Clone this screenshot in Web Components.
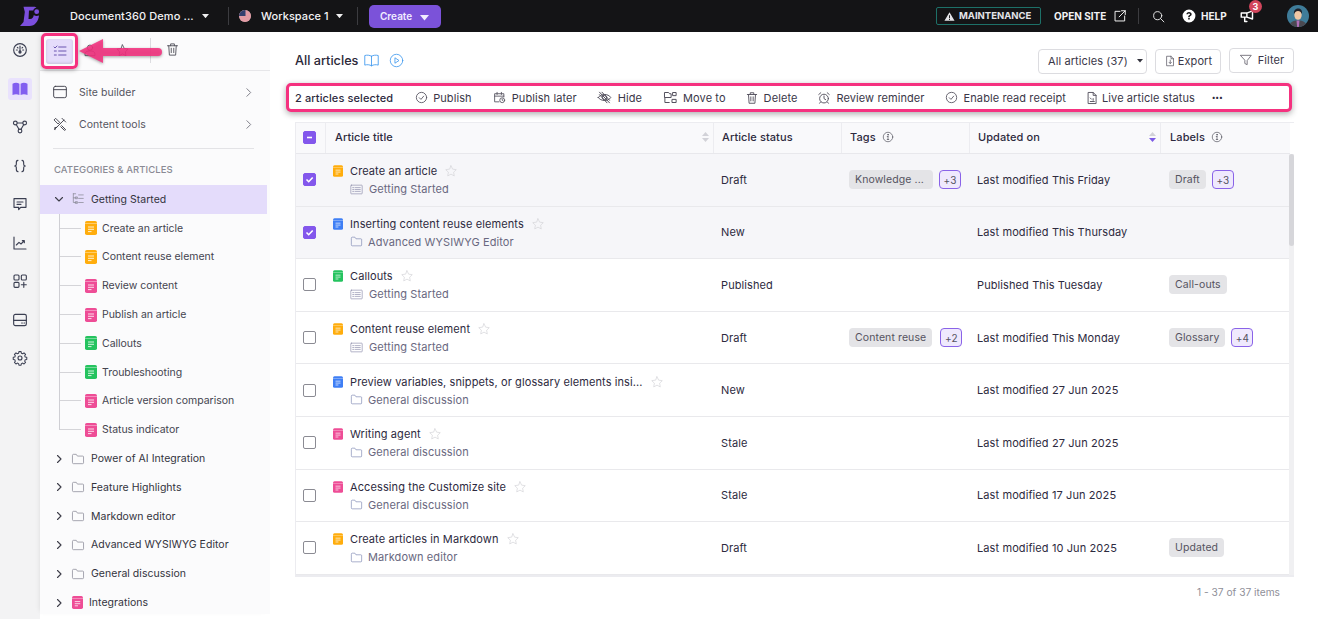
<!DOCTYPE html>
<html><head><meta charset="utf-8"><title>All articles</title>
<style>
html,body{margin:0;padding:0;height:100%;overflow:hidden;background:#fff}
body{font-family:Inter,"Noto Sans",sans-serif;font-size:11px;color:#2d2a3e}
app-shell{height:619px}
</style></head><body>
<app-shell>
  <app-topbar></app-topbar>
  <app-rail slot="rail"></app-rail>
  <app-sidebar slot="side"></app-sidebar>
  <articles-main slot="main"></articles-main>
</app-shell>
<script>
const ICONS={
 gauge:'<circle cx="12" cy="12" r="9.500"/><path d="M12 6v9M8 8l1 1M16 8l-1 1M6.500 12h1.500M16 12h1.500"/><circle cx="12" cy="15" r="1.600" fill="currentColor"/>',
 book:'<path fill="currentColor" stroke="none" d="M2 5c3-1.600 6.500-1.600 9.200 0v15c-2.700-1.500-6.200-1.500-9.200 0zM12.800 5c2.700-1.600 6.200-1.600 9.200 0v15c-3-1.500-6.500-1.500-9.200 0z"/>',
 bookline:'<path d="M12 6C9.500 4.300 5.500 4 2.500 5v13.500c3-1 7-.7 9.500 1 2.500-1.700 6.500-2 9.500-1V5c-3-1-7-.7-9.500 1zM12 6v13.500"/>',
 nodes:'<circle cx="5" cy="6" r="2.800"/><circle cx="19" cy="6" r="2.800"/><circle cx="12" cy="18" r="2.800"/><path d="M7.800 6h8.400M6.500 8.500l4 7M17.500 8.500l-4 7"/>',
 braces:'<path d="M9 3.500C6.500 3.500 6.500 5 6.500 7v2.500c0 1.500-1 2.500-2.500 2.500 1.500 0 2.500 1 2.500 2.500V17c0 2 0 3.500 2.500 3.500M15 3.500c2.500 0 2.500 1.500 2.500 3.500v2.500c0 1.500 1 2.500 2.500 2.500-1.500 0-2.500 1-2.500 2.500V17c0 2 0 3.500-2.500 3.500"/>',
 comment:'<path d="M3 4h18v13h-8l-3 3.500V17H3zM7.500 9h9M7.500 12.500h6"/>',
 chart:'<path d="M3 3v18h18M6.500 15l4-4 3 2.500 5-5M15.500 8.500h3v3"/>',
 apps:'<rect x="3" y="3" width="7.500" height="7.500" rx="1.500"/><rect x="14" y="3" width="7.500" height="7.500" rx="1.500"/><rect x="3" y="14" width="7.500" height="7.500" rx="1.500"/><path d="M17.700 14v7.500M14 17.700h7.500"/>',
 layout:'<rect x="2.500" y="3.500" width="19" height="17" rx="2.500"/><path d="M2.500 12.500h19M14.500 16.500h1M18 16.500h1"/>',
 gear:'<circle cx="12" cy="12" r="3"/><path d="M10.200 2.500h3.600l.5 2.600 2.200.9 2.200-1.500 2.600 2.600-1.500 2.200.9 2.200 2.600.5v3.600l-2.600.5-.9 2.200 1.500 2.200-2.600 2.600-2.200-1.500-2.200.9-.5 2.600h-3.600l-.5-2.600-2.200-.9-2.200 1.500-2.600-2.600 1.500-2.200-.9-2.200-2.600-.5v-3.600l2.600-.5.9-2.200-1.500-2.200 2.600-2.600 2.200 1.500 2.200-.9z" transform="translate(1.200 .2) scale(.9)"/>',
 listcheck:'<path d="M10 6h11M10 12h11M10 18h11M3 6l1.500 1.500L7.500 4.500M3.500 12h3M3.500 18h3"/>',
 trash:'<path d="M4 6h16M9 6V3h6v3M6 6l1 15h10l1-15M10 10v7M14 10v7"/>',
 star:'<path d="M12 3l2.800 5.800 6.200.9-4.500 4.400 1.100 6.300L12 17.400l-5.600 3 1.100-6.300L3 9.700l6.200-.9z"/>',
 person:'<circle cx="12" cy="8" r="4.500"/><path d="M3.500 21v-2.500c0-3 3-5 8.500-5s8.500 2 8.500 5V21z"/>',
 window:'<rect x="2.500" y="3.500" width="19" height="17" rx="2.500"/><path d="M2.500 8.500h19"/>',
 tools:'<path d="M4 20L18 6M15 3.500l5.500 5.500M3.500 5.500l2-2 6 6-2 2zM14.500 14.500l6 6-2 1-5.500-5.500M7 17l-3 .5.500 3"/>',
 chevr:'<path d="M9 5l7 7-7 7"/>',
 chevd:'<path d="M5 9l7 7 7-7"/>',
 tree:'<path d="M4 3v15h5M4 10h5M4 3h4M13 5h8M13 11h8M13 18h8"/><rect x="8" y="8.500" width="3" height="3"/><rect x="8" y="16.500" width="3" height="3"/>',
 folder:'<path d="M2.500 5.500a1.500 1.500 0 0 1 1.500-1.500h5l2 3h9a1.500 1.500 0 0 1 1.500 1.500v10a1.500 1.500 0 0 1-1.500 1.500H4a1.500 1.500 0 0 1-1.500-1.500z"/>',
 listbox:'<rect x="1.500" y="4" width="21" height="16" rx="1"/><path d="M5 8.500h2.500M10 8.500h9M5 12h2.500M10 12h9M5 15.500h2.500M10 15.500h9"/>',
 play:'<circle cx="12" cy="12" r="10"/><path d="M10 8l6 4-6 4z"/>',
 check:'<circle cx="12" cy="12" r="9.500"/><path d="M8 12.500l3 3 5-6"/>',
 checkd:'<circle cx="12" cy="12" r="9.500" stroke-dasharray="13 1.500"/><path d="M8 12.500l3 3 5-6"/>',
 cal:'<path d="M11 20H3V5h17v6M3 9.500h17M7.500 2.500v4M15.500 2.500v4"/><circle cx="17" cy="17" r="4.500"/><path d="M17 14.800V17l1.500 1"/>',
 eyeoff:'<path d="M2 12c4-6.500 16-6.500 20 0-4 6.500-16 6.500-20 0z"/><circle cx="12" cy="12" r="3.500"/><path d="M4 3.500l16 17M8 3.500l12 13M4 7.500l12 13"/>',
 move:'<path d="M3 4h6l1.500 2H13v6H3zM3 12v8h7M16 4h5v5h-5zM15 15h6v5h-6z"/>',
 alarm:'<circle cx="12" cy="13" r="7.500"/><path d="M12 8.500V13l3 2M3 6l3.500-3M21 6l-3.500-3M6 19l-1.500 2M18 19l1.500 2"/>',
 filestat:'<path d="M6 2.500h8l5 5v14H6zM14 2.500v5h5M9 12l2 2M9 18h7M14 13v3"/>',
 filedown:'<path d="M6 2.500h8l5 5v14H6zM14 2.500v5h5M12.500 10v7M10 14.500l2.500 2.500 2.500-2.500"/>',
 filter:'<path d="M3 4h18l-7 9v7l-4-2v-5z"/>',
 info:'<circle cx="12" cy="12" r="9.500"/><path d="M12 11v6M10.500 17h3M10.500 11H12"/><circle cx="12" cy="7.500" r=".8" fill="currentColor"/>',
 warn:'<path fill="currentColor" stroke="none" d="M12 2.500L23 21.500H1zM11 9v7h2V9zM11 17.500v2h2v-2z" fill-rule="evenodd"/>',
 ext:'<path d="M12 4H3.500v16.500H20V12M14.500 3H21v6.500M21 3L10.500 13.500"/>',
 search:'<circle cx="10.500" cy="10.500" r="7.500"/><path d="M16 16l6 6"/>',
 help:'<path fill="currentColor" stroke="none" fill-rule="evenodd" d="M12 1a11 11 0 1 0 0 22 11 11 0 0 0 0-22zM12 5c2.800 0 4.500 1.600 4.500 3.800 0 1.700-1 2.600-2.100 3.400-.9.600-1.200 1-1.200 1.800h-2.600c0-1.800.7-2.600 1.800-3.400.9-.6 1.400-1 1.400-1.700 0-.8-.7-1.400-1.800-1.400s-1.900.7-2 1.700H7.500C7.600 6.700 9.300 5 12 5zM10.600 15.500h2.700V18.200h-2.700z"/>',
 mega:'<path d="M2 6.500h9L20 3v13l-9-3H7.500v7H11M2 6.500V13h5.500M11 6.500V13"/>'
};
const svg=(n,s,c,w)=>`<svg width="${s}" height="${s}" viewBox="0 0 24 24" fill="none" stroke="${c||'currentColor'}" stroke-width="${w||1.6}" stroke-linecap="round" stroke-linejoin="round" style="display:block;flex:none;color:${c||'currentColor'}">${ICONS[n]}</svg>`;
const doc=(c,w,h)=>`<svg width="${w}" height="${h}" viewBox="0 0 12 14" style="display:block;flex:none"><rect width="12" height="14" rx="1.800" fill="${c}"/><rect y="2.300" width="12" height=".7" fill="#fff" opacity=".55"/><path d="M3 6h6M3 8.300h6M3 10.600h3.500" stroke="#fff" stroke-width=".9" opacity=".9"/></svg>`;
const COL={o:'#ffad0d',p:'#ee4d96',g:'#25c35f',b:'#3f7ff5'};
const caret=(c,s)=>`<svg width="${s||7}" height="${(s||7)*.6}" viewBox="0 0 10 6" style="display:block;flex:none"><path d="M0 0h10L5 6z" fill="${c}"/></svg>`;
function def(name,html){customElements.define(name,class extends HTMLElement{connectedCallback(){if(this.shadowRoot)return;const r=this.attachShadow({mode:'open'});r.innerHTML=typeof html==='function'?html(this):html;}});}

def('app-shell',`<style>:host{display:flex;flex-direction:column;width:1318px;height:619px;overflow:hidden}
.b{display:flex;flex:1;min-height:0}</style><slot></slot><div class="b"><slot name="rail"></slot><slot name="side"></slot><slot name="main"></slot></div>`);

def('app-topbar',`<style>
:host{display:flex;align-items:center;height:32px;background:#141416;color:#f2f2f4;font:500 11px/1 Inter,sans-serif;flex:none;position:relative}
.sep{width:1px;height:18px;background:#3c3c40}
.logo{margin-left:19px;margin-right:30px}
.create{width:72px;height:23px;background:#7b52d9;border-radius:5px;display:flex;align-items:center;font:600 10px/1 Inter,sans-serif;color:#f1ecff;box-sizing:border-box;padding-left:11px;gap:8px}
.maint{width:105px;height:18px;border:1px solid #1d7068;border-radius:2px;box-sizing:border-box;display:flex;align-items:center;padding-left:7px;gap:4px;font:700 9.500px/1 Inter,sans-serif;color:#e4e4e8;margin-left:495px}
.up{font-weight:700}
.badge{position:absolute;left:1249px;top:0;width:13px;height:13px;border-radius:50%;background:#d2465c;color:#fff;font:700 9px/13px Inter,sans-serif;text-align:center}
</style>
<svg class="logo" width="21" height="21" viewBox="0 0 21 21"><path fill="#7c4fdd" d="M4.500 .7H15c1 0 2 .3 2.500.8-2 .5-3 1.700-3.200 3H10L9.500 13H11c2.500 0 3.500-2 3.800-4 1.200 1 3.200 1.300 5.200.5-.5 5.500-4 10.500-9.500 10.500H1l3.500-4 1.300-10z"/><circle cx="17.700" cy="5.700" r="2.400" fill="#7c4fdd"/></svg>
<span style="width:123px;white-space:nowrap;letter-spacing:.1px">Document360 Demo ...</span>
<span style="margin-left:9px">${caret('#f0f0f0')}</span>
<span class="sep" style="margin-left:19px"></span>
<svg width="12" height="12" viewBox="0 0 12 12" style="margin-left:10px;border-radius:50%;flex:none"><rect width="12" height="12" fill="#fff"/><path d="M0 1h12M0 3h12M0 5h12M0 7h12M0 9h12M0 11h12" stroke="#c8384b" stroke-width="1"/><rect width="6.500" height="6" fill="#34406e"/></svg>
<span style="margin-left:10px;width:68px;white-space:nowrap;letter-spacing:.05px">Workspace 1</span>
<span style="margin-left:7px">${caret('#f0f0f0')}</span>
<span class="sep" style="margin-left:14px"></span>
<span class="create" style="margin-left:11px"><span>Create</span><span style="margin-top:4px">${caret('#f1ecff',9)}</span></span>
<span class="maint">${svg('warn',11,'#e4e4e8')}<span>MAINTENANCE</span></span>
<span class="up" style="margin-left:13px;width:54px;white-space:nowrap;font-size:10px">OPEN SITE</span>
<span style="margin-left:5px">${svg('ext',14,'#f0f0f0',1.7)}</span>
<span class="sep" style="margin-left:11px;height:16px"></span>
<span style="margin-left:13px">${svg('search',13,'#f0f0f0',1.7)}</span>
<span style="margin-left:17px">${svg('help',14,'#fff')}</span>
<span class="up" style="margin-left:5px;width:27px;font-size:10px">HELP</span>
<span style="margin-left:12px">${svg('mega',15,'#fff',2.300)}</span>
<span class="badge">3</span>
<svg width="22" height="22" viewBox="0 0 22 22" style="margin-left:32px;flex:none;border-radius:50%"><rect width="22" height="22" fill="#3f7c99"/><path d="M2 22c.5-5 4-6.500 9-6.500s8.500 1.500 9 6.500z" fill="#4b4a52"/><path d="M9.500 15.500h3l-.6 6.500h-1.800z" fill="#b06fb8"/><ellipse cx="11" cy="10" rx="3.700" ry="4.800" fill="#f0c7a5"/><path d="M7 9c-.5-4 2-5.500 4.200-5.500S15.500 5 15 9c-1-2-2-3-4-3S8 7 7 9z" fill="#20222a"/></svg>`);

def('rail-item',h=>`<style>:host{display:flex;align-items:center;justify-content:center;width:24px;height:22px;margin:0 auto 16.500px;border-radius:3px;color:#3b3f52}
:host([active]){background:#e9e2fd;color:#825ff0}</style>${svg(h.getAttribute('i'),h.getAttribute('s')||16,null,1.7)}`);
def('app-rail',`<style>:host{display:block;width:40px;background:#f3f3f4;flex:none;padding-top:7px;box-sizing:border-box}</style>
<rail-item i="gauge"></rail-item><rail-item i="book" active s="18"></rail-item><rail-item i="nodes"></rail-item><rail-item i="braces"></rail-item><rail-item i="comment"></rail-item><rail-item i="chart"></rail-item><rail-item i="apps"></rail-item><rail-item i="layout"></rail-item><rail-item i="gear"></rail-item>`);

def('tree-row',h=>{const k=h.getAttribute('kind'),t=h.getAttribute('t'),c=h.getAttribute('c');
 let inner;
 if(k==='child'){inner=`<span class="ln ${h.hasAttribute('last')?'last':''}"></span><span style="margin-left:4px">${doc(COL[c],12,14)}</span><span style="margin-left:5px" class="tx c">${t}</span>`}
 else if(k==='doc'){inner=`<span class="ch">${svg('chevr',12,'#3c3c48',2.200)}</span><span style="margin-left:7px">${doc(COL[c],11,13)}</span><span style="margin-left:6px" class="tx d">${t}</span>`}
 else{const o=k==='open';inner=`<span class="ch">${svg(o?'chevd':'chevr',12,'#3c3c48',2.200)}</span><span style="margin-left:6px">${svg(o?'tree':'folder',14,'#8b8b98',1.3)}</span><span style="margin-left:6px" class="tx d">${t}</span>`}
 return `<style>:host{display:flex;align-items:center;height:28.800px;box-sizing:border-box;padding-left:${k==='child'?19:13}px}
 :host([sel]){background:#e4dcfb;margin-right:3px}
 .ln{width:22px;height:100%;border-left:1px solid #cfcfd4;box-sizing:border-box;background:linear-gradient(#d4d4d8,#d4d4d8) 0 50%/100% 1px no-repeat;flex:none}
 .ln.last{height:50%;align-self:flex-start;background:linear-gradient(#d4d4d8,#d4d4d8) 0 100%/100% 1px no-repeat}
 .ch{width:12px;flex:none}.tx{white-space:nowrap;font-size:10.500px}.c{color:#44444f;letter-spacing:-.03px}.d{color:#33333d;letter-spacing:.03px}</style>${inner}`});

def('side-menu',h=>`<style>:host{display:flex;align-items:center;height:32px;padding:0 15px 0 12px;color:#55555f;font-size:10.500px;letter-spacing:.05px}
span{margin-left:11px;flex:1}</style>${svg(h.getAttribute('i'),16,'#3f3f4a',1.4)}<span>${h.getAttribute('t')}</span>${svg('chevr',13,'#6e6e78',1.6)}`);

def('app-sidebar',`<style>
:host{display:block;width:230px;height:582px;background:#fbfbfc;flex:none;overflow:hidden;font-family:Inter,sans-serif;box-shadow:-3px 0 5px -3px #0000001a}
.top{display:flex;align-items:center;height:38px;border-bottom:1px solid #e6e6e9;position:relative}
.act{width:27px;height:25px;margin-left:6px;background:#e5dcfb;border-radius:3px;display:flex;align-items:center;justify-content:center;box-shadow:0 -1px 3px #0002 inset}
.ic{position:absolute;top:11px;color:#4a4a55}
.hl{position:absolute;left:1px;top:1px;width:37px;height:36px;border:3px solid #f5317f;border-radius:5px;box-sizing:border-box;box-shadow:0 1px 4px #0005}
.arrow{position:absolute;left:38px;top:5px}
.vs{position:absolute;left:110px;top:6px;width:1px;height:25px;background:#dcdce0}
.hr{height:1px;background:#e3e3e6;margin:8px 16px 0 13px}
.cap{height:16px;line-height:16px;margin:13px 0 7px 14px;color:#8a8a94;font-size:9.500px;font-weight:500;letter-spacing:.1px}
.wrap{padding-top:5px}
</style>
<div class="top"><span class="act">${svg('listcheck',16,'#6a55b0',1.5)}</span>
<span class="ic" style="left:43px">${svg('person',14,'#4a4a55',1.4)}</span>
<span class="ic" style="left:75px">${svg('star',15,'#4a4a55',1.3)}</span>
<span class="vs"></span>
<span class="ic" style="left:125px;top:10px">${svg('trash',15,'#4a4a55',1.4)}</span>
<span class="hl"></span>
<svg class="arrow" width="88" height="30" viewBox="0 0 88 30" style="filter:drop-shadow(0 1.500px 1.500px #0006)"><path d="M1 14L25 2v9h55a4 4 0 0 1 0 8H25v7z" fill="#f5317f" fill-opacity=".88"/></svg></div>
<div class="wrap"><side-menu i="window" t="Site builder"></side-menu><side-menu i="tools" t="Content tools"></side-menu></div>
<div class="hr"></div><div class="cap">CATEGORIES &amp; ARTICLES</div>
<tree-row kind="open" sel t="Getting Started"></tree-row>
<tree-row kind="child" c="o" t="Create an article"></tree-row>
<tree-row kind="child" c="o" t="Content reuse element"></tree-row>
<tree-row kind="child" c="p" t="Review content"></tree-row>
<tree-row kind="child" c="p" t="Publish an article"></tree-row>
<tree-row kind="child" c="g" t="Callouts"></tree-row>
<tree-row kind="child" c="g" t="Troubleshooting"></tree-row>
<tree-row kind="child" c="p" t="Article version comparison"></tree-row>
<tree-row kind="child" last c="p" t="Status indicator"></tree-row>
<tree-row kind="f" t="Power of AI Integration"></tree-row>
<tree-row kind="f" t="Feature Highlights"></tree-row>
<tree-row kind="f" t="Markdown editor"></tree-row>
<tree-row kind="f" t="Advanced WYSIWYG Editor"></tree-row>
<tree-row kind="f" t="General discussion"></tree-row>
<tree-row kind="doc" c="p" t="Integrations"></tree-row>`);

def('tool-action',h=>`<style>:host{display:flex;align-items:center;gap:6px;white-space:nowrap;color:#3a3748;letter-spacing:.09px}
.ib{display:flex;justify-content:center;width:${h.getAttribute('w')}px}</style><span class="ib">${svg(h.getAttribute('i'),h.getAttribute('s')||13,'#55525f',1.6)}</span><span>${h.getAttribute('t')}</span>`);
def('selection-bar',`<style>:host{display:flex;align-items:center;height:29px;margin:9px 26px 0 -9px;padding:0 0 0 6px;border:3px solid #f5317f;border-radius:5px;box-sizing:border-box;gap:21px;box-shadow:0 2px 6px #0005;background:#fff;font-size:11px}
b{font-weight:500;letter-spacing:.1px;color:#2d2a3e;margin-right:2px}
i{font-weight:700;letter-spacing:.4px;font-style:normal;font-size:7px;margin-left:-4px;color:#2d2a3e}</style>
<b>2 articles selected</b>
<tool-action i="check" w="11" t="Publish"></tool-action><tool-action i="cal" w="13" t="Publish later"></tool-action><tool-action i="eyeoff" w="14" s="15" t="Hide"></tool-action><tool-action i="move" w="14" s="15" t="Move to"></tool-action><tool-action i="trash" w="11" s="14" t="Delete"></tool-action><tool-action i="alarm" w="12" s="14" t="Review reminder"></tool-action><tool-action i="checkd" w="12" t="Enable read receipt"></tool-action><tool-action i="filestat" w="9" s="14" t="Live article status"></tool-action><i>•••</i>`);

def('x-check',h=>{const s=h.getAttribute('state');return `<style>:host{display:block;width:13px;height:13px;box-sizing:border-box;border-radius:2px;border:1px solid #8b8b93;background:#fff;flex:none}
:host([state]){background:#8357ec;border-color:#8357ec}svg{display:block}</style>${s==='on'?'<svg width="11" height="11" viewBox="0 0 11 11"><path d="M2.500 5.500l2.200 2.200 4-4.200" stroke="#fff" stroke-width="1.600" fill="none"/></svg>':s==='mix'?'<svg width="11" height="11" viewBox="0 0 11 11"><path d="M3 5.500h5" stroke="#fff" stroke-width="1.600"/></svg>':''}`});
def('x-chip',h=>`<style>:host{display:inline-flex;align-items:center;height:19px;padding:0 6px;border-radius:4px;background:#e4e4e7;color:#55535f;font-size:10.500px;box-sizing:border-box;white-space:nowrap;flex:none}
:host([more]){background:#efe9fd;border:1px solid #8a63e8;padding:0;justify-content:center;width:22px;margin-left:6px;color:#55535f;font-size:10px}</style><slot></slot>`);

const sortIc=(act)=>`<svg width="7" height="10" viewBox="0 0 7 10" style="display:block"><path d="M3.500 0L7 4H0z" fill="#d2d2d8"/><path d="M3.500 10L0 6h7z" fill="${act?'#7c5ae6':'#d2d2d8'}"/></svg>`;
const GRID='grid-template-columns:30px 388px 128px 128px 191px 130px';
def('table-head',`<style>:host{display:grid;${GRID};height:31px;background:#f9f9fb;border-bottom:1px solid #e8e8ec;box-sizing:border-box;font-weight:500;font-size:11px;letter-spacing:.08px;color:#2d2a3e;margin-right:4px}
div{display:flex;align-items:center;padding:0 0 2px 8px;border-right:1px solid #ececf0;box-sizing:border-box;gap:6px}
div:last-child{border-right:0;padding-left:9px}
.sp{justify-content:space-between;padding-right:4px}
.a{padding-left:7px}.b{padding-left:9px}
</style><div class="a"><x-check state="mix"></x-check></div><div class="sp b"><span>Article title</span>${sortIc()}</div><div>Article status</div><div>Tags ${svg('info',12,'#55555f',1.4)}</div><div class="sp"><span>Updated on</span>${sortIc(1)}</div><div>Labels ${svg('info',12,'#55555f',1.4)}</div>`);

def('article-row',h=>{const g=a=>h.getAttribute(a)||'';
 const chips=(v,m,w,mg)=>v?`<x-chip ${w?`style="width:${w}px"`:''}>${v}</x-chip>${m?`<x-chip more ${mg?`style="margin-left:${mg}px"`:''}>${m}</x-chip>`:''}`:'';
 const f=g('ci')==='f';
 const cat=f?svg('folder',13,'#7a84b0',1.2):svg('listbox',13,'#8a8aa8',1.2);
 return `<style>:host{display:grid;${GRID};height:52.600px;border-bottom:1px solid #e9e9ec;box-sizing:border-box;color:#2d2a3e;font-size:11px;letter-spacing:.1px}
 :host([sel]){background:#f6f6f9}
 .c{display:flex;align-items:center;padding-left:7px;white-space:nowrap}
 .t{display:flex;flex-direction:column;justify-content:center;gap:6px;padding:1px 0 0 7px}
 .l{display:flex;align-items:center;height:12px;white-space:nowrap}
 .sub{color:#696880;padding-left:17px;gap:${f?5:6}px}
 .tt{margin-left:7px;margin-right:7px}
 </style><div class="c"><x-check ${h.hasAttribute('sel')?'state="on"':''}></x-check></div>
 <div class="t"><div class="l">${doc(COL[g('c')],10,12)}<span class="tt">${g('t')}</span>${svg('star',14,'#d4d4d8',1.2)}</div><div class="l sub">${cat}<span>${g('cat')}</span></div></div>
 <div class="c">${g('st')}</div><div class="c">${chips(g('tag'),g('tm'),g('tw'),g('tg'))}</div><div class="c">${g('up')}</div><div class="c" style="padding-left:8px">${chips(g('lb'),g('lm'))}</div>`});

def('article-table',`<style>:host{display:block;margin:10px 24px 0 0;border-left:1px solid #ececf0;border-top:1px solid #ececf0;background:#fff}
.b{display:flex}.r{flex:1;min-width:0}
.bar{width:5px;background:#f0f0f2;flex:none}.th{height:92px;background:#d6d6da;border-radius:3px}
.end{height:2px;background:#ececf0}
</style><table-head></table-head><div class="b"><div class="r"><slot></slot></div><div class="bar"><div class="th"></div></div></div><div class="end"></div>`);

def('toolbar-btn',`<style>:host{display:flex;align-items:center;justify-content:center;height:25px;border:1px solid #dcdce0;border-radius:4px;box-sizing:border-box;gap:2px;color:#3a3748;font-size:11px;letter-spacing:.1px;background:#fff}</style><slot></slot>`);

def('articles-main',`<style>:host{display:block;flex:1;min-width:0;padding:16px 0 0 25px;font-family:Inter,sans-serif;box-sizing:border-box}
.h{display:flex;align-items:center;height:26px;padding-right:24px}
h1{font:500 12.700px/1 Inter,sans-serif;margin:0;color:#2b2838}
.sp{flex:1}
.foot{text-align:right;color:#8f8f99;font-size:10.200px;margin:9px 38px 0 0}
.ti{margin:-2px 0 0}
</style>
<div class="h"><h1>All articles</h1><span class="ti" style="margin-left:5px">${svg('bookline',17,'#3c97ee',1.2)}</span><span class="ti" style="margin-left:9px">${svg('play',15,'#3c97ee',1.3)}</span><span class="sp"></span>
<toolbar-btn style="width:109px;justify-content:flex-start;padding-left:9px">All articles (37)<span style="margin-left:7px">${caret('#33333d',6)}</span></toolbar-btn>
<toolbar-btn style="width:66px;margin-left:8px">${svg('filedown',12,'#55525f',1.4)}Export</toolbar-btn>
<toolbar-btn style="width:65px;margin-left:8px;gap:5px;margin-top:-2px">${svg('filter',14,'#55525f',1.3)}Filter</toolbar-btn></div>
<selection-bar></selection-bar>
<article-table>
<article-row sel c="o" t="Create an article" ci="l" cat="Getting Started" st="Draft" tag="Knowledge ..." tw="84" tm="+3" up="Last modified This Friday" lb="Draft" lm="+3"></article-row>
<article-row sel c="b" t="Inserting content reuse elements" ci="f" cat="Advanced WYSIWYG Editor" st="New" up="Last modified This Thursday"></article-row>
<article-row c="g" t="Callouts" ci="l" cat="Getting Started" st="Published" up="Published This Tuesday" lb="Call-outs"></article-row>
<article-row c="o" t="Content reuse element" ci="l" cat="Getting Started" st="Draft" tag="Content reuse" tm="+2" tg="8" up="Last modified This Monday" lb="Glossary" lm="+4"></article-row>
<article-row c="b" t="Preview variables, snippets, or glossary elements insi..." ci="f" cat="General discussion" st="New" up="Last modified 27 Jun 2025"></article-row>
<article-row c="p" t="Writing agent" ci="f" cat="General discussion" st="Stale" up="Last modified 27 Jun 2025"></article-row>
<article-row c="p" t="Accessing the Customize site" ci="f" cat="General discussion" st="Stale" up="Last modified 17 Jun 2025"></article-row>
<article-row c="o" t="Create articles in Markdown" ci="f" cat="Markdown editor" st="Draft" up="Last modified 10 Jun 2025" lb="Updated"></article-row>
</article-table>
<div class="foot">1 - 37 of 37 items</div>`);
</script></body></html>
